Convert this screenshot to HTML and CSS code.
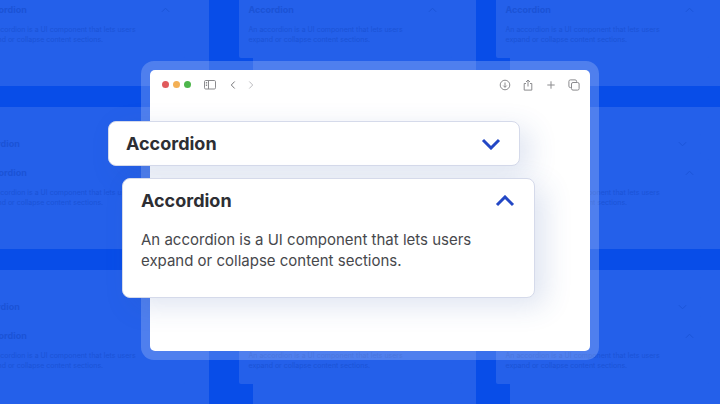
FILE: index.html
```html
<!DOCTYPE html>
<html lang="en">
<head>
<meta charset="utf-8">
<meta name="viewport" content="width=device-width, initial-scale=1">
<title>Accordion</title>
<link rel="stylesheet" href="styles.css">
</head>
<body>
<div class="backdrop" id="backdrop" aria-hidden="true"></div>
<template id="tile">
  <div class="tile">
    <div class="tile-card tile-closed"><b>Accordion</b><svg class="tile-chevron" viewBox="0 0 20 12"><path d="M2 2l8 8 8-8"/></svg></div>
    <div class="tile-card tile-open">
      <div class="tile-head"><b>Accordion</b><svg class="tile-chevron" viewBox="0 0 20 12"><path d="M2 10l8-8 8 8"/></svg></div>
      <p>An accordion is a UI component that lets users<br>expand or collapse content sections.</p>
    </div>
  </div>
</template>
<main class="frame">
  <div class="window">
    <div class="toolbar">
      <span class="dot red"></span><span class="dot amber"></span><span class="dot green"></span>
      <button class="tool sidebar" type="button" aria-label="Sidebar"><svg viewBox="0 0 12 12"><rect x="0.5" y="1.5" width="11" height="8.5" rx="1.2"/><path d="M4.5 1.5V10M1.8 3.5h1.4M1.8 5h1.4M1.8 6.5h1.4"/></svg></button>
      <button class="tool back" type="button" aria-label="Back"><svg viewBox="0 0 12 12"><path d="M7.7 2.5L4.3 6l3.4 3.5"/></svg></button>
      <button class="tool forward" type="button" aria-label="Forward"><svg viewBox="0 0 12 12"><path d="M4.3 2.5L7.7 6 4.3 9.5"/></svg></button>
      <div class="actions">
        <button class="tool" type="button" aria-label="Downloads"><svg viewBox="0 0 12 12"><circle cx="6" cy="6" r="4.8"/><path d="M6 3.5v4.8M4.3 6.6L6 8.3l1.7-1.7"/></svg></button>
        <button class="tool" type="button" aria-label="Share"><svg viewBox="0 0 12 12"><path d="M4 4.5H2.2v6.6h7.6V4.5H8M6 7.5V1M4 3l2-2 2 2"/></svg></button>
        <button class="tool" type="button" aria-label="New tab"><svg viewBox="0 0 12 12"><path d="M6 2.3v7.4M2.3 6h7.4"/></svg></button>
        <button class="tool" type="button" aria-label="Tabs"><svg viewBox="0 0 12 12"><rect x="3.5" y="3.5" width="7.6" height="7.6" rx="1.5"/><path d="M3.5 8.6H2.4Q.9 8.6.9 7.1V2.4Q.9.9 2.4.9h4.7q1.5 0 1.5 1.5v1.1"/></svg></button>
      </div>
    </div>
    <section class="card closed">
      <button class="card-head" type="button" aria-expanded="false"><span>Accordion</span><svg class="chevron" viewBox="0 0 20 12"><path d="M2 2l8 8 8-8"/></svg></button>
    </section>
    <section class="card open">
      <button class="card-head" type="button" aria-expanded="true" aria-controls="panel"><span>Accordion</span><svg class="chevron" viewBox="0 0 20 12"><path d="M2 10l8-8 8 8"/></svg></button>
      <p class="panel" id="panel">An accordion is a UI component that lets users<br>expand or collapse content sections.</p>
    </section>
  </div>
</main>
<script src="tiles.js"></script>
</body>
</html>
```

FILE: styles.css
```css
* { box-sizing: border-box; }

body {
  margin: 0;
  min-height: 100vh;
  padding: 61px 121px 44px 141px;
  background: #084de8;
  color: #2d2e33;
  font-family: Inter, "Liberation Sans", sans-serif;
  position: relative;
  overflow: hidden;
}

button {
  border: 0;
  padding: 0;
  background: none;
  color: inherit;
  font: inherit;
}

p { margin: 0; }

svg {
  display: block;
  fill: none;
  stroke: currentColor;
}

/* Repeated miniature windows behind the main one */
.backdrop {
  position: absolute;
  inset: 0;
  overflow: hidden;
  display: grid;
  grid-template-columns: 233px 223px 223px;
  column-gap: 34px;
  row-gap: 21px;
  justify-content: center;
  align-content: start;
  padding-right: 2px;
}

.tile {
  width: 223px;
  height: 142px;
  padding-top: 27px;
  background: #2460ea;
  color: #1b53d6;
  font-size: 7px;
  line-height: 10px;
}

.tile:nth-child(-n+3) { margin-top: -56px; }

.tile-card {
  border-radius: 2px;
  background: #2460ea;
}

.tile-card b { font-size: 9px; }

.tile-closed {
  display: flex;
  align-items: center;
  justify-content: space-between;
  height: 20px;
  margin: 0 32px 5px -20px;
  padding: 0 14px 0 9px;
}

.tile-open {
  height: 62px;
  margin: 0 24px 0 -14px;
  padding: 9px 15px 0 10px;
}

.tile-head {
  display: flex;
  align-items: center;
  justify-content: space-between;
  margin-bottom: 10px;
}

.tile-chevron {
  width: 9px;
  height: 6px;
  stroke-width: 2;
}

/* Browser window */
.frame {
  position: relative;
  padding: 9px;
  border-radius: 13px;
  background: rgba(255, 255, 255, 0.2);
}

.window {
  padding-bottom: 53px;
  border-radius: 5px;
  background: #fff;
}

.toolbar {
  display: flex;
  align-items: center;
  gap: 4px;
  height: 29px;
  margin-bottom: 22px;
  padding: 0 10px 0 12px;
  color: #8b8b8e;
}

.dot {
  width: 7px;
  height: 7px;
  border-radius: 50%;
}

.red { background: #e05a5c; }
.amber { background: #f3b055; }
.green { background: #4db64b; }

.tool svg {
  width: 12px;
  height: 12px;
}

.sidebar { margin-left: 9px; }
.back { margin-left: 7px; color: #77777a; }
.forward { margin-left: 2px; color: #bcbcc0; }

.actions {
  display: flex;
  gap: 11px;
  margin-left: auto;
}

/* Accordion cards */
.card {
  position: relative;
  border: 1px solid #d5daea;
  border-radius: 8px;
  background: #fff;
  box-shadow: 10px 8px 28px rgba(52, 88, 170, 0.16);
}

.closed {
  margin: 0 70px 12px -42px;
  padding: 10px 18px 10px 17px;
}

.open {
  margin: 0 55px 0 -28px;
  padding: 10px 19px 26px 18px;
}

.card-head {
  display: flex;
  align-items: center;
  justify-content: space-between;
  width: 100%;
  font-size: 18px;
  font-weight: 700;
  line-height: 23px;
}

.chevron {
  width: 20px;
  height: 12px;
  color: #2347c5;
  stroke-width: 3;
}

.panel {
  margin-top: 17px;
  color: #47484c;
  font-size: 15px;
  line-height: 21px;
}
```

FILE: tiles.js
```js
const backdrop = document.getElementById("backdrop");
const tile = document.getElementById("tile");
for (let i = 0; i < 9; i += 1) {
  backdrop.append(tile.content.cloneNode(true));
}
```
